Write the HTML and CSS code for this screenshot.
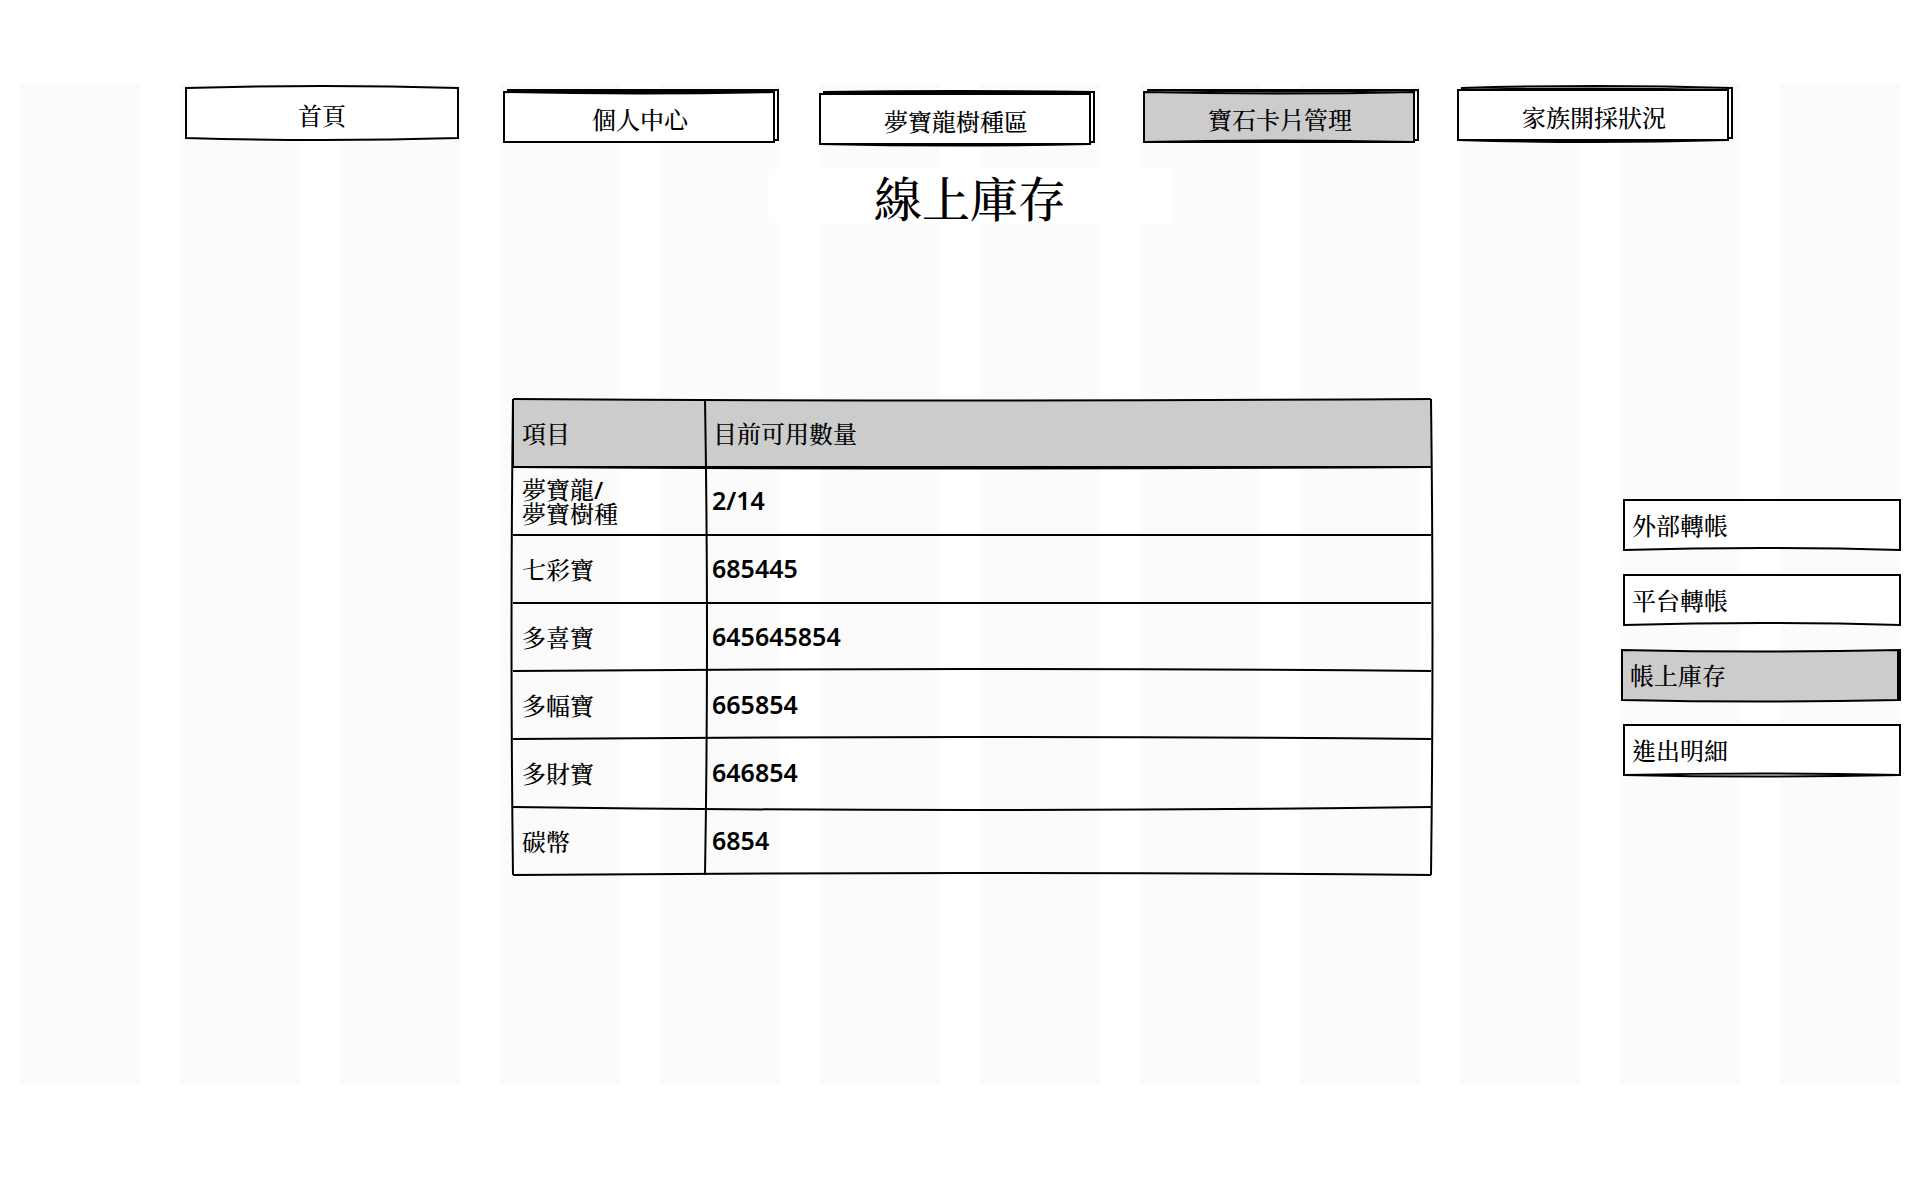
FILE: index.html
```html
<!DOCTYPE html>
<html lang="zh-Hant">
<head>
<meta charset="utf-8">
<title>線上庫存</title>
<link rel="stylesheet" href="styles.css">
</head>
<body>
<div class="page">
  <nav class="main-nav" aria-label="主選單">
    <a class="box single" href="#home">
      <svg class="sketch" viewBox="0 0 274 52" preserveAspectRatio="none" aria-hidden="true"><path class="paper" d="M1 1Q137 -3 273 1V51Q137 55 1 51Z"/></svg>
      <span>首頁</span>
    </a>
    <a class="box stacked" href="#profile">
      <svg class="sketch" viewBox="0 0 276 54" preserveAspectRatio="none" aria-hidden="true"><path class="paper" d="M5 1H275V51H5Z"/><path class="paper" d="M1 3H271V53H1Z"/><path class="line" d="M1 3Q136 6 271 3"/></svg>
      <span>個人中心</span>
    </a>
    <a class="box stacked" href="#seeds">
      <svg class="sketch" viewBox="0 0 276 54" preserveAspectRatio="none" aria-hidden="true"><path class="paper" d="M5 1Q140 -1 275 1V51H5Z"/><path class="line" d="M5 1H275"/><path class="paper" d="M1 3H271V53H1Z"/><path class="line" d="M1 53Q136 56 271 53"/></svg>
      <span>夢寶龍樹種區</span>
    </a>
    <a class="box stacked" href="#gems" aria-current="page">
      <svg class="sketch" viewBox="0 0 276 54" preserveAspectRatio="none" aria-hidden="true"><path class="paper" d="M5 1Q140 4 275 1V51H5Z"/><path class="line" d="M5 1H275"/><path class="shade" d="M1 3Q136 6 271 3V53Q136 50 1 53Z"/><path class="line" d="M1 53H271"/></svg>
      <span>寶石卡片管理</span>
    </a>
    <a class="box stacked" href="#family">
      <svg class="sketch" viewBox="0 0 276 54" preserveAspectRatio="none" aria-hidden="true"><path class="paper" d="M5 1Q140 -3 275 1V51H5Z"/><path class="paper" d="M1 3Q136 0 271 3V53Q136 57 1 53Z"/><path class="line" d="M1 3H271M1 53H271"/></svg>
      <span>家族開採狀況</span>
    </a>
  </nav>

  <h1>線上庫存</h1>

  <main class="content">
    <div class="stock">
      <svg class="sketch" viewBox="0 0 920 478" preserveAspectRatio="none" aria-hidden="true">
        <path class="fill" d="M1 1Q460 4 919 1V69Q460 73 1 69Z"/>
        <path class="line" d="M1 1Q460 4 919 1M1 69H919M1 69Q460 72 919 69M1 137H919M1 205H919M1 273Q460 269 919 273M1 341Q460 337 919 341M1 409Q460 415 919 409M1 477Q460 473 919 477"/>
        <path class="line" d="M1 1V69M1 1Q-2 239 1 477M193 1Q197 239 193 477M919 1Q922 239 919 477"/>
      </svg>
      <table>
        <thead>
          <tr><th scope="col">項目</th><th scope="col">目前可用數量</th></tr>
        </thead>
        <tbody>
          <tr><th scope="row">夢寶龍/<br>夢寶樹種</th><td>2/14</td></tr>
          <tr><th scope="row">七彩寶</th><td>685445</td></tr>
          <tr><th scope="row">多喜寶</th><td>645645854</td></tr>
          <tr><th scope="row">多幅寶</th><td>665854</td></tr>
          <tr><th scope="row">多財寶</th><td>646854</td></tr>
          <tr><th scope="row">碳幣</th><td>6854</td></tr>
        </tbody>
      </table>
    </div>

    <nav class="side-nav" aria-label="庫存選單">
      <a class="box" href="#external">
        <svg class="sketch" viewBox="0 0 278 52" preserveAspectRatio="none" aria-hidden="true"><path class="paper" d="M1 1H277V51Q139 47 1 51Z"/></svg>
        <span>外部轉帳</span>
      </a>
      <a class="box" href="#platform">
        <svg class="sketch" viewBox="0 0 278 52" preserveAspectRatio="none" aria-hidden="true"><path class="paper" d="M1 1H277V51Q139 47 1 51Z"/></svg>
        <span>平台轉帳</span>
      </a>
      <a class="box wide" href="#stock" aria-current="page">
        <svg class="sketch" viewBox="0 0 280 52" preserveAspectRatio="none" aria-hidden="true"><path class="shade" d="M1 1Q140 4 279 1V51Q140 54 1 51Z"/><path class="line" d="M277 1V51"/></svg>
        <span>帳上庫存</span>
      </a>
      <a class="box" href="#history">
        <svg class="sketch" viewBox="0 0 278 52" preserveAspectRatio="none" aria-hidden="true"><path class="paper" d="M1 1H277V51Q139 54 1 51Z"/><path class="line" d="M1 51Q139 48 277 51"/></svg>
        <span>進出明細</span>
      </a>
    </nav>
  </main>
</div>
</body>
</html>
```
FILE: styles.css
```css
* {
  box-sizing: border-box;
}

body {
  margin: 0;
  background: #fff;
  color: #000;
  font-family: "Noto Sans", "Noto Serif CJK TC", "Noto Sans CJK TC", serif;
  font-size: 24px;
  font-weight: 500;
  line-height: 24px;
}

/* Twelve guide columns behind the page */
.page {
  margin: 84px 0 116px;
  min-height: 1000px;
  padding-top: 3px;
  background: linear-gradient(to right, transparent 12.5%, #fbfbfb 12.5% 87.5%, transparent 87.5%) 0 0 / calc(100% / 12) 100%;
}

/* Hand-drawn outlines */
.sketch {
  position: absolute;
  inset: 0;
  width: 100%;
  height: 100%;
  overflow: visible;
  pointer-events: none;
}

.sketch path {
  stroke: #000;
  stroke-width: 2px;
  vector-effect: non-scaling-stroke;
}

.sketch .paper { fill: #fff; }
.sketch .shade { fill: #ccc; }
.sketch .line { fill: none; }
.sketch .fill { fill: #ccc; stroke: none; }

.box {
  position: relative;
  display: flex;
  align-items: center;
  height: 52px;
  color: inherit;
  text-decoration: none;
}

.box span {
  position: relative;
}

.main-nav {
  display: grid;
  grid-template-columns: 318fr 316fr 324fr 314fr 276fr;
  align-items: start;
  height: 60px;
  margin: 0 187px 0 185px;
}

.main-nav .box {
  justify-content: center;
  padding-top: 6px;
}

.main-nav .single {
  width: 274px;
}

.main-nav .stacked {
  width: 276px;
  height: 54px;
  padding: 8px 2px 0 0;
}

.main-nav .box:nth-child(even) {
  margin-top: 2px;
}

.main-nav .box:nth-child(3) {
  margin-top: 4px;
}

h1 {
  width: 402px;
  height: 54px;
  margin: 22px auto 0;
  translate: 10px;
  background: #fff;
  font-size: 48px;
  font-weight: 500;
  line-height: 60px;
  text-align: center;
}

.content {
  display: grid;
  grid-template-columns: 1fr 920px 1fr;
  align-items: start;
  margin-top: 175px;
  padding: 0 19px 0 43px;
}

.stock {
  position: relative;
  grid-column: 2;
  padding: 1px 0;
}

table {
  position: relative;
  width: 100%;
  border-collapse: collapse;
  table-layout: fixed;
}

tr {
  height: 68px;
}

th,
td {
  padding: 2px 8px 0;
  font-weight: 500;
  text-align: left;
  vertical-align: middle;
}

th:first-child {
  width: 193px;
  padding: 2px 10px 0;
}

td {
  padding: 0 7px 2px;
  font-size: 25px;
  font-weight: 600;
}

.side-nav {
  display: flex;
  flex-direction: column;
  align-items: flex-end;
  gap: 23px;
  padding-top: 101px;
}

.side-nav .box {
  width: 278px;
  padding: 2px 9px 0;
}

.side-nav .wide {
  width: 280px;
}
```
